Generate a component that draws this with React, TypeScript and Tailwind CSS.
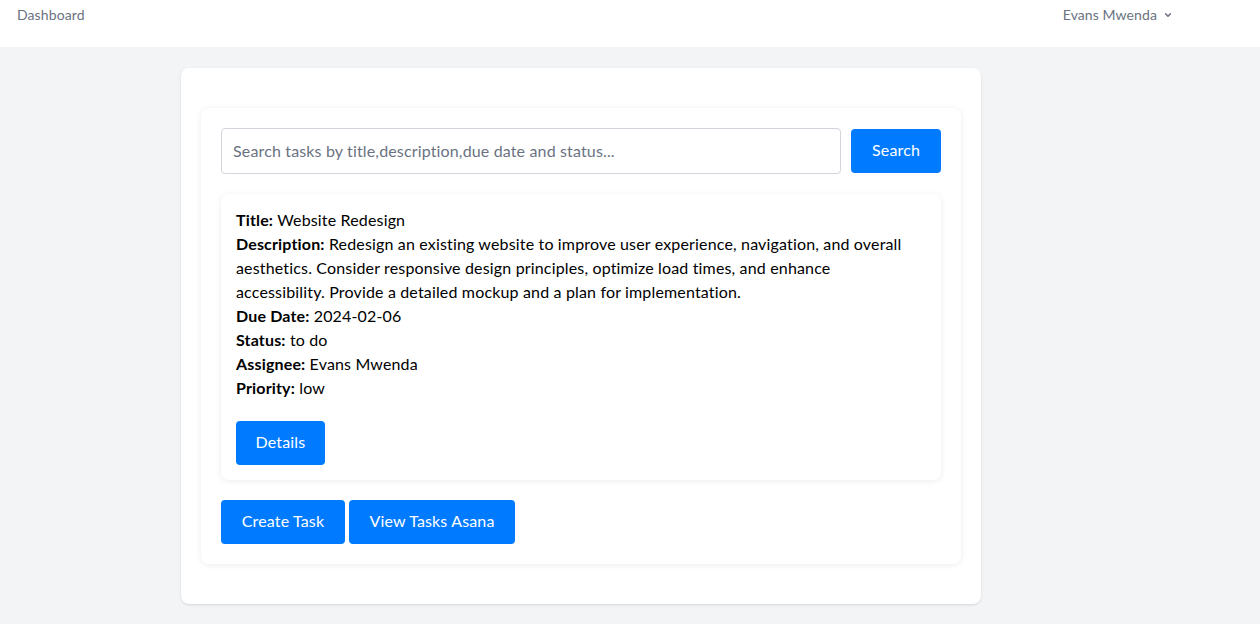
import React from "react";

export default function App() {
  const font = { fontFamily: "Lato, 'Noto Sans', sans-serif" };
  return (
    <div className="min-h-screen bg-[#f3f4f6]" style={font}>
      <header className="h-[47px] bg-white flex justify-between items-start pt-[5px] pl-[17px] pr-[86px]">
        <span className="text-sm leading-5 text-gray-500 tracking-[0.1px]">Dashboard</span>
        <span className="text-sm leading-5 text-gray-500 flex items-center gap-[5px] tracking-[0.1px]">
          Evans Mwenda
          <svg width="12" height="12" viewBox="0 0 20 20" fill="none" stroke="currentColor" strokeWidth="2.6" strokeLinecap="round" strokeLinejoin="round">
            <path d="M6 8l4 4 4-4" />
          </svg>
        </span>
      </header>
      <main className="pt-[21px] pl-[181px]">
        <div className="w-[800px] bg-white rounded-lg shadow-sm px-5 py-10">
          <div className="bg-white rounded-lg shadow-[0_1px_6px_rgba(0,0,0,0.08)] p-5">
            <div className="flex gap-[10px] items-center">
              <input
                className="w-[620px] h-[46px] border border-gray-300 rounded px-[11px] pb-[2px] text-[16px] tracking-[0.15px] placeholder:text-gray-500 outline-none"
                placeholder="Search tasks by title,description,due date and status..."
              />
              <button className="w-[90px] h-[44px] pb-[2px] bg-[#007bff] text-white rounded text-[16px] tracking-[0.15px]">Search</button>
            </div>
            <div className="mt-5 rounded-lg shadow-[0_1px_6px_rgba(0,0,0,0.08)] px-[15px] pt-[14px] pb-[15px] text-[16px] leading-6 text-black tracking-[0.16px]">
              <div className="max-w-[672px]">
                <div><b className="font-bold">Title:</b> Website Redesign</div>
                <div>
                  <b className="font-bold">Description:</b> Redesign an existing website to improve user experience, navigation, and overall aesthetics. Consider responsive design principles, optimize load times, and enhance accessibility. Provide a detailed mockup and a plan for implementation.
                </div>
                <div><b className="font-bold">Due Date:</b> 2024-02-06</div>
                <div><b className="font-bold">Status:</b> to do</div>
                <div><b className="font-bold">Assignee:</b> Evans Mwenda</div>
                <div><b className="font-bold">Priority:</b> low</div>
              </div>
              <button className="mt-[21px] w-[89px] h-[44px] pb-[2px] bg-[#007bff] text-white rounded">Details</button>
            </div>
            <div className="mt-5 flex gap-1">
              <button className="w-[124px] h-[44px] pb-[2px] bg-[#007bff] text-white rounded text-[16px] tracking-[0.15px]">Create Task</button>
              <button className="w-[166px] h-[44px] pb-[2px] bg-[#007bff] text-white rounded text-[16px] tracking-[0.15px]">View Tasks Asana</button>
            </div>
          </div>
        </div>
      </main>
    </div>
  );
}
